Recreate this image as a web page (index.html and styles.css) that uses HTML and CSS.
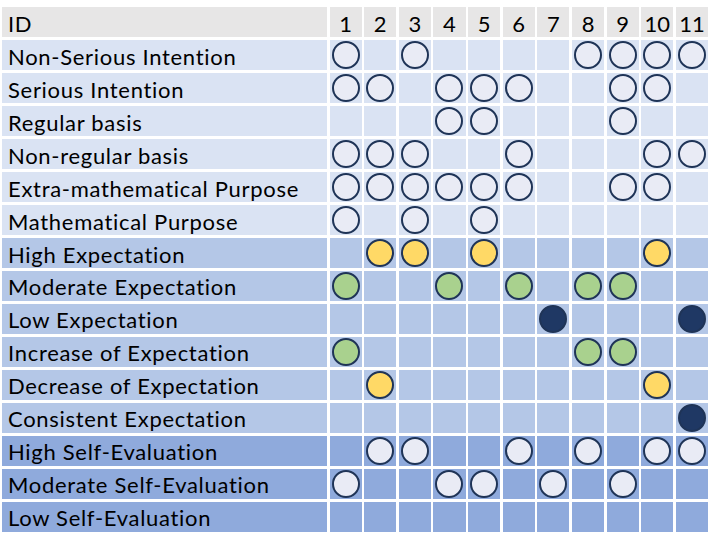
FILE: index.html
```html
<!DOCTYPE html>
<html>
<head>
<meta charset="utf-8">
<link rel="stylesheet" href="styles.css">
</head>
<body>
<div class="tbl">
  <div class="row rh"><div class="lbl">ID</div><div>1</div><div>2</div><div>3</div><div>4</div><div>5</div><div>6</div><div>7</div><div>8</div><div>9</div><div>10</div><div>11</div></div>

  <div class="row ra"><div class="lbl">Non-Serious Intention</div><div><i class="o"></i></div><div></div><div><i class="o"></i></div><div></div><div></div><div></div><div></div><div><i class="o"></i></div><div><i class="o"></i></div><div><i class="o"></i></div><div><i class="o"></i></div></div>
  <div class="row ra"><div class="lbl">Serious Intention</div><div><i class="o"></i></div><div><i class="o"></i></div><div></div><div><i class="o"></i></div><div><i class="o"></i></div><div><i class="o"></i></div><div></div><div></div><div><i class="o"></i></div><div><i class="o"></i></div><div></div></div>
  <div class="row ra"><div class="lbl">Regular basis</div><div></div><div></div><div></div><div><i class="o"></i></div><div><i class="o"></i></div><div></div><div></div><div></div><div><i class="o"></i></div><div></div><div></div></div>
  <div class="row ra"><div class="lbl">Non-regular basis</div><div><i class="o"></i></div><div><i class="o"></i></div><div><i class="o"></i></div><div></div><div></div><div><i class="o"></i></div><div></div><div></div><div></div><div><i class="o"></i></div><div><i class="o"></i></div></div>
  <div class="row ra"><div class="lbl">Extra-mathematical Purpose</div><div><i class="o"></i></div><div><i class="o"></i></div><div><i class="o"></i></div><div><i class="o"></i></div><div><i class="o"></i></div><div><i class="o"></i></div><div></div><div></div><div><i class="o"></i></div><div><i class="o"></i></div><div></div></div>
  <div class="row ra"><div class="lbl">Mathematical Purpose</div><div><i class="o"></i></div><div></div><div><i class="o"></i></div><div></div><div><i class="o"></i></div><div></div><div></div><div></div><div></div><div></div><div></div></div>

  <div class="row rb"><div class="lbl">High Expectation</div><div></div><div><i class="o y"></i></div><div><i class="o y"></i></div><div></div><div><i class="o y"></i></div><div></div><div></div><div></div><div></div><div><i class="o y"></i></div><div></div></div>
  <div class="row rb"><div class="lbl">Moderate Expectation</div><div><i class="o g"></i></div><div></div><div></div><div><i class="o g"></i></div><div></div><div><i class="o g"></i></div><div></div><div><i class="o g"></i></div><div><i class="o g"></i></div><div></div><div></div></div>
  <div class="row rb"><div class="lbl">Low Expectation</div><div></div><div></div><div></div><div></div><div></div><div></div><div><i class="o n"></i></div><div></div><div></div><div></div><div><i class="o n"></i></div></div>
  <div class="row rb"><div class="lbl">Increase of Expectation</div><div><i class="o g"></i></div><div></div><div></div><div></div><div></div><div></div><div></div><div><i class="o g"></i></div><div><i class="o g"></i></div><div></div><div></div></div>
  <div class="row rb"><div class="lbl">Decrease of Expectation</div><div></div><div><i class="o y"></i></div><div></div><div></div><div></div><div></div><div></div><div></div><div></div><div><i class="o y"></i></div><div></div></div>
  <div class="row rb"><div class="lbl">Consistent Expectation</div><div></div><div></div><div></div><div></div><div></div><div></div><div></div><div></div><div></div><div></div><div><i class="o n"></i></div></div>

  <div class="row rc"><div class="lbl">High Self-Evaluation</div><div></div><div><i class="o"></i></div><div><i class="o"></i></div><div></div><div></div><div><i class="o"></i></div><div></div><div><i class="o"></i></div><div></div><div><i class="o"></i></div><div><i class="o"></i></div></div>
  <div class="row rc"><div class="lbl">Moderate Self-Evaluation</div><div><i class="o"></i></div><div></div><div></div><div><i class="o"></i></div><div><i class="o"></i></div><div></div><div><i class="o"></i></div><div></div><div><i class="o"></i></div><div></div><div></div></div>
  <div class="row rc"><div class="lbl">Low Self-Evaluation</div><div></div><div></div><div></div><div></div><div></div><div></div><div></div><div></div><div></div><div></div><div></div></div>
</div>
</body>
</html>
```
FILE: styles.css
```css
html, body {
  margin: 0;
  padding: 0;
  background: #ffffff;
}
body {
  padding: 7px 0 0 2px;
  font-family: "Lato", "Open Sans", sans-serif;
  color: #000;
}
.tbl {
  width: 706px;
  height: 525px;
  display: grid;
  grid-template-columns: 325px repeat(11, 1fr);
  grid-template-rows: repeat(16, 1fr);
  column-gap: 2.5px;
  row-gap: 2.5px;
}
.row {
  display: contents;
}
.row > div {
  display: flex;
  align-items: center;
  justify-content: center;
  font-size: 22px;
  line-height: 1;
  overflow: hidden;
}
.row > .lbl,
.rh > div {
  padding-top: 3px;
}
.row > .lbl {
  justify-content: flex-start;
  padding-left: 6px;
  letter-spacing: 0.7px;
  white-space: nowrap;
}
.rh > div { background: #e7e6e6; }
.ra > div { background: #dae3f3; }
.rb > div { background: #b4c7e7; }
.rc > div { background: #8faadc; }
.o {
  display: block;
  width: 28px;
  height: 28px;
  box-sizing: border-box;
  border: 2.6px solid #1f3457;
  border-radius: 50%;
  background: #e9ebf5;
}
.o.y { background: #ffd966; }
.o.g { background: #a9d18e; }
.o.n { background: #1f3864; }
```
